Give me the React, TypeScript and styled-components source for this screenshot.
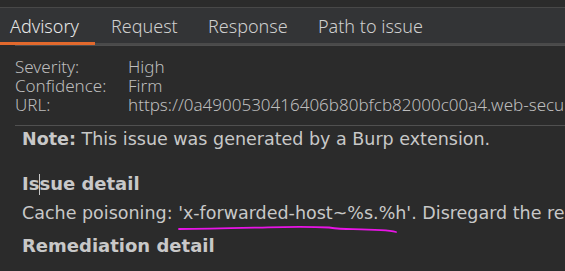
import React from "react";
import styled, { createGlobalStyle } from "styled-components";

const Global = createGlobalStyle`
  html, body { margin: 0; padding: 0; background: #2b2b2b; overflow: hidden; }
  #root { width: 565px; height: 271px; overflow: hidden; }
`;

const Page = styled.div`
  width: 565px;
  height: 271px;
  background: #2b2b2b;
  overflow: hidden;
  display: flex;
  flex-direction: column;
`;

const TopStrip = styled.div`
  height: 7px;
  background: #2b2b2b;
  border-bottom: 1px solid #484848;
  flex: none;
`;

const TabBar = styled.div`
  box-sizing: border-box;
  height: 37px;
  background: #333436;
  display: flex;
  gap: 6px;
  align-items: stretch;
  border-bottom: 2px solid #4a4a4a;
  flex: none;
`;

const Tab = styled.div<{ $active?: boolean; $w?: number }>`
  box-sizing: border-box;
  ${(p) => (p.$w ? `width: ${p.$w}px;` : "")}
  padding: 2px 0 0 10px;
  display: flex;
  align-items: center;
  font-family: "Noto Sans", sans-serif;
  font-weight: 300;
  font-size: 18px;
  white-space: nowrap;
  color: ${(p) => (p.$active ? "#e8e8e8" : "#cfcfcf")};
  border-bottom: 3px solid ${(p) => (p.$active ? "#e2692d" : "transparent")};
  margin-bottom: -2px;
`;

const Panel = styled.div`
  margin-left: 15px;
  border-top: 1px solid #4e4e4e;
  display: flex;
  flex-direction: column;
`;

const Meta = styled.div`
  display: grid;
  grid-template-columns: 113px 1fr;
  padding-top: 11px;
  font-family: "Noto Sans", sans-serif;
  font-weight: 300;
  font-size: 17px;
  line-height: 19px;
  color: #bdbdbd;
  white-space: nowrap;
`;

const Divider = styled.div`
  margin-top: 11px;
  border-top: 1px solid #505050;
`;

const Body = styled.div`
  padding: 3px 0 0 7px;
  font-family: "DejaVu Sans", sans-serif;
  color: #c8c8c8;
  white-space: nowrap;
`;

const Para = styled.div<{ $mt?: number }>`
  font-size: 17.5px;
  line-height: 21px;
  margin-top: ${(p) => p.$mt ?? 0}px;
`;

const Heading = styled.div<{ $mt: number }>`
  font-size: 18px;
  font-weight: bold;
  line-height: 23px;
  margin-top: ${(p) => p.$mt}px;
`;

const Caret = styled.span`
  display: inline-block;
  width: 1px;
  height: 21px;
  background: #c8c8c8;
  vertical-align: -5px;
  margin: 0 -0.5px;
`;

const Marked = styled.span`
  position: relative;
`;

const Squiggle = styled.svg`
  position: absolute;
  left: 0;
  top: 22px;
  overflow: visible;
`;

export default function App() {
  return (
    <Page>
      <Global />
      <TopStrip />
      <TabBar>
        <Tab $active $w={95}>Advisory</Tab>
        <Tab $w={91}>Request</Tab>
        <Tab $w={104}>Response</Tab>
        <Tab>Path to issue</Tab>
      </TabBar>
      <Panel>
        <Meta>
          <span>Severity:</span>
          <span>High</span>
          <span>Confidence:</span>
          <span>Firm</span>
          <span>URL:</span>
          <span>https://0a4900530416406b80bfcb82000c00a4.web-security-academy.net/</span>
        </Meta>
        <Divider />
        <Body>
          <Para>
            <b>Note:</b> This issue was generated by a Burp extension.
          </Para>
          <Heading $mt={22}>
            Is<Caret />sue detail
          </Heading>
          <Para $mt={8}>
            Cache poisoning:{" "}
            <Marked>
              'x-forwarded-host~%s.%h'
              <Squiggle width="220" height="9" viewBox="0 0 220 9">
                <path
                  d="M1 4 C 30 3.8, 60 3, 90 2.3 C 115 1.8, 140 2, 151 2.5 C 158 3.5, 163 4, 175 4.2 C 195 4.5, 210 5, 218 7"
                  fill="none"
                  stroke="#e814e6"
                  strokeWidth="1.8"
                  strokeLinecap="round"
                />
              </Squiggle>
            </Marked>
            . Disregard the request and response for this issue.
          </Para>
          <Heading $mt={10}>Remediation detail</Heading>
        </Body>
      </Panel>
    </Page>
  );
}
